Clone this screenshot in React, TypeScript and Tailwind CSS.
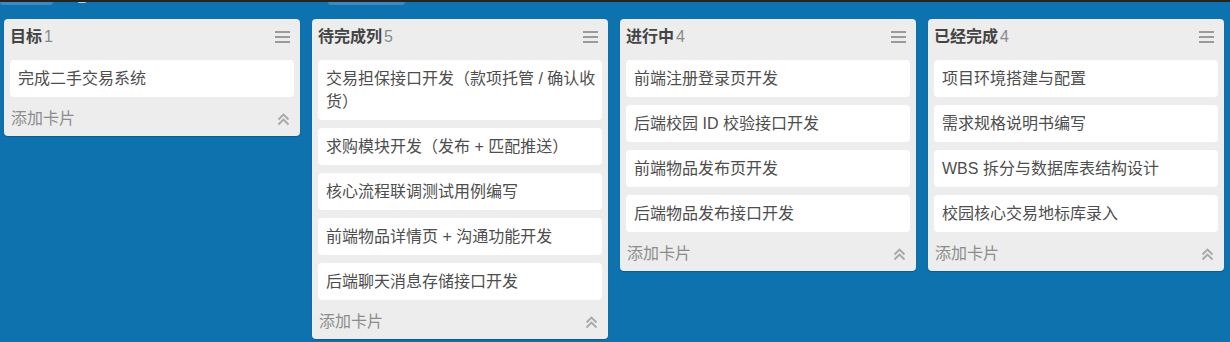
import React from "react";

type List = { title: string; cards: string[] };

const lists: List[] = [
  { title: "目标", cards: ["完成二手交易系统"] },
  {
    title: "待完成列",
    cards: [
      "交易担保接口开发（款项托管 / 确认收货）",
      "求购模块开发（发布 + 匹配推送）",
      "核心流程联调测试用例编写",
      "前端物品详情页 + 沟通功能开发",
      "后端聊天消息存储接口开发",
    ],
  },
  {
    title: "进行中",
    cards: ["前端注册登录页开发", "后端校园 ID 校验接口开发", "前端物品发布页开发", "后端物品发布接口开发"],
  },
  {
    title: "已经完成",
    cards: ["项目环境搭建与配置", "需求规格说明书编写", "WBS 拆分与数据库表结构设计", "校园核心交易地标库录入"],
  },
];

const Menu = () => (
  <svg width="15" height="12" viewBox="0 0 15 12" className="shrink-0">
    <rect x="0" y="0" width="15" height="2" fill="#9a9a9a" />
    <rect x="0" y="5" width="15" height="2" fill="#9a9a9a" />
    <rect x="0" y="10" width="15" height="2" fill="#9a9a9a" />
  </svg>
);

const Chevrons = () => (
  <svg width="13" height="13" viewBox="0 0 13 13" className="shrink-0">
    <polyline points="1.5,6.5 6.5,1.5 11.5,6.5" fill="none" stroke="#a8a8a8" strokeWidth="1.8" />
    <polyline points="1.5,11.5 6.5,6.5 11.5,11.5" fill="none" stroke="#a8a8a8" strokeWidth="1.8" />
  </svg>
);

export default function App() {
  return (
    <div
      className="w-[1230px] h-[342px] bg-[#0d72ae] overflow-hidden flex flex-col"
      style={{ fontFamily: '"Liberation Sans", "Noto Sans CJK SC", sans-serif' }}
    >
      <div className="h-[2px] bg-[#232323] shrink-0" />
      <div className="h-[17px] shrink-0 flex items-start">
        <div className="w-[53px] h-[3px] bg-[#3d89bf] rounded-b-[3px]" />
        <div className="ml-[25px] w-[8px] h-[1px] bg-[#b9d3e6] rounded-b-[2px]" />
        <div className="ml-[242px] w-[77px] h-[3px] bg-[#3d89bf] rounded-b-[3px]" />
      </div>
      <div className="flex items-start gap-[12px] pl-[4px]">
        {lists.map((l) => (
          <div key={l.title} className="w-[296px] shrink-0 bg-[#ededed] rounded-[4px] px-[6px] shadow-[0_1px_1px_rgba(0,0,0,0.2)]">
            <div className="flex items-center justify-between pt-[6px] pb-[11px] pr-[4px]">
              <div className="leading-[24px] text-[16px]">
                <span className="font-bold text-[#444]">{l.title}</span>
                <span className="text-[#8a8a8a] ml-[2px]">{l.cards.length}</span>
              </div>
              <Menu />
            </div>
            <div className="flex flex-col gap-[8px]">
              {l.cards.map((c) => (
                <div key={c} className="bg-white rounded-[4px] pl-[8px] pr-[5px] py-[7px] text-[16px] leading-[23px] text-[#4e4e4e]">
                  {c}
                </div>
              ))}
            </div>
            <div className="flex items-center justify-between pt-[10px] pb-[5px] pl-[1px] pr-[4px]">
              <span className="text-[16px] leading-[24px] text-[#8c8c8c]">添加卡片</span>
              <Chevrons />
            </div>
          </div>
        ))}
      </div>
    </div>
  );
}
